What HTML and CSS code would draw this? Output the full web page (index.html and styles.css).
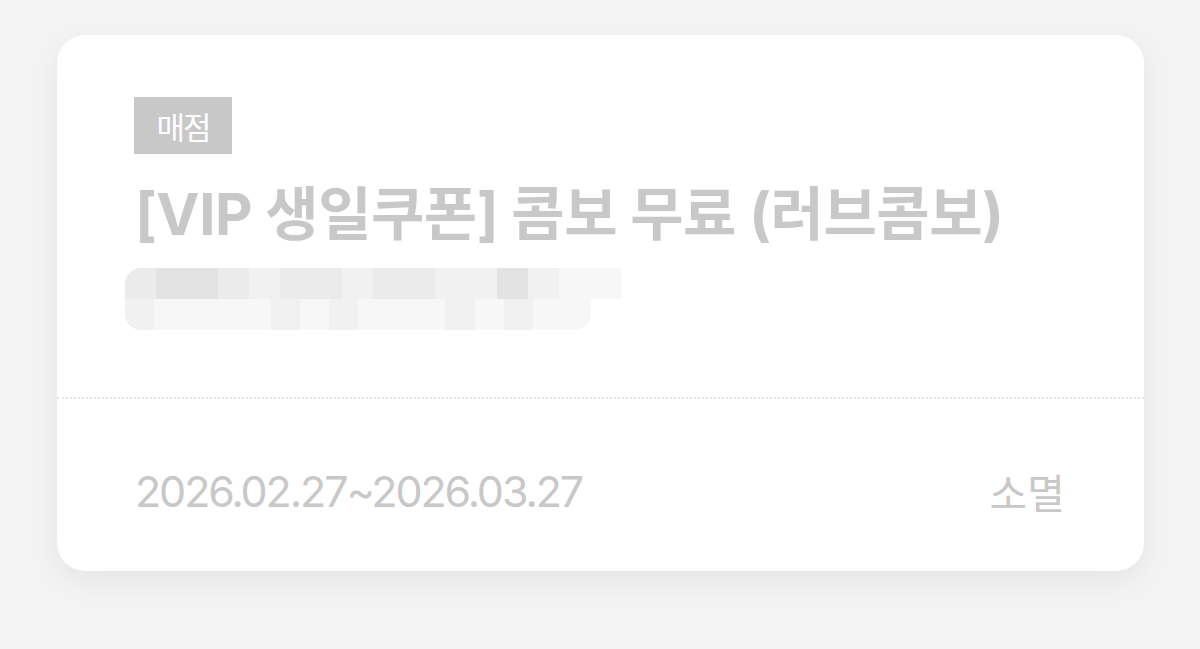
FILE: index.html
```
<!DOCTYPE html>
<html lang="ko">
<head>
    <meta charset="UTF-8">
    <meta name="viewport" content="width=device-width, initial-scale=1.0">
    <title>쿠폰</title>
    <link rel="stylesheet" href="styles.css">
</head>
<body>
    <main class="page">
        <article class="coupon">
            <div class="coupon-body">
                <span class="badge">매점</span>
                <h2 class="title">[VIP 생일쿠폰] 콤보 무료 (러브콤보)</h2>
                <!-- 가려진 쿠폰 번호 -->
                <div class="masked">
                    <div class="mask-row top">
                        <i class="m2"></i><i class="m3"></i><i class="m3"></i><i class="m2"></i><i class="m1"></i><i class="m2"></i><i class="m2"></i><i class="m1"></i><i class="m2"></i><i class="m2"></i><i class="m1"></i><i class="m1"></i><i class="m3"></i><i class="m1"></i><i class="m0"></i><i class="m0"></i>
                    </div>
                    <div class="mask-row bottom">
                        <i class="m1"></i><i class="m0"></i><i class="m0"></i><i class="m0"></i><i class="m0"></i><i class="m1"></i><i class="m0"></i><i class="m1"></i><i class="m0"></i><i class="m0"></i><i class="m0"></i><i class="m1"></i><i class="m0"></i><i class="m1"></i><i class="m0"></i><i class="m0"></i>
                    </div>
                </div>
            </div>
            <div class="coupon-foot">
                <span class="period">2026.02.27~2026.03.27</span>
                <span class="status">소멸</span>
            </div>
        </article>
    </main>
</body>
</html>
```

FILE: styles.css
```
/* General Styles */
html, body {
    margin: 0;
    padding: 0;
    background: #f3f3f3;
    font-family: Inter, "Noto Sans CJK KR", sans-serif;
}

.page {
    padding: 35px 56px 78px 57px;
}

.coupon {
    background: #fff;
    border-radius: 28px;
    box-shadow: 0 10px 30px rgba(0, 0, 0, 0.06);
    height: 536px;
    display: flex;
    flex-direction: column;
}

.coupon-body {
    padding: 62px 77px 0;
    height: 300px;
    border-bottom: 2px dotted #e2e2e2;
}

.badge {
    display: inline-block;
    background: #c8c8c8;
    color: #fff;
    font-family: "Noto Sans CJK KR", sans-serif;
    font-size: 31px;
    letter-spacing: -2px;
    line-height: 57px;
    width: 98px;
    text-align: center;
}

.title {
    margin: 20px 0 0 1px;
    font-family: Inter, "Noto Sans CJK KR", sans-serif;
    font-weight: 700;
    font-size: 58px;
    line-height: 80px;
    letter-spacing: -0.5px;
    color: #c8c8c8;
}

.masked { margin: 14px 0 0 -9px; width: 500px; }
.mask-row { display: flex; height: 31px; overflow: hidden; }
.mask-row i { display: block; width: 31px; height: 100%; }
.mask-row.top { border-radius: 16px 0 0 0; }
.mask-row.bottom { border-radius: 0 0 16px 16px; width: 466px; }
.m0 { background: #f7f7f7; }
.m1 { background: #f1f1f1; }
.m2 { background: #ebebeb; }
.m3 { background: #e3e3e3; }

.coupon-foot {
    flex: 1;
    display: flex;
    align-items: center;
    justify-content: space-between;
    padding: 12px 79px 0 78px;
    color: #c8c8c8;
}

.period {
    font-family: Inter, "Noto Sans CJK KR", sans-serif;
    font-size: 43px;
    letter-spacing: -2.1px;
}

.status {
    font-family: "Noto Sans CJK KR", sans-serif;
    font-size: 41px;
}
```
